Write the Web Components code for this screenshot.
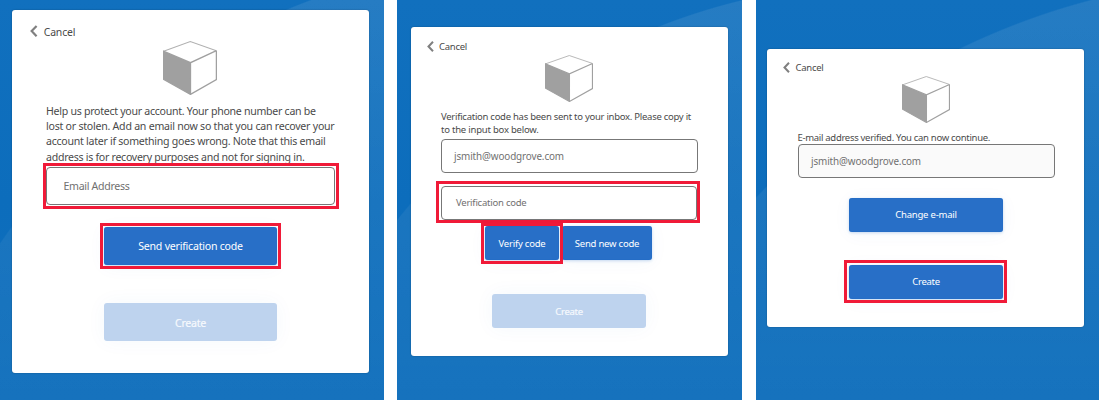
<!DOCTYPE html>
<html lang="en"><head><meta charset="utf-8"><title>Recovery email</title>
<style>
body{margin:0;background:#fff;font-family:"Noto Sans","Open Sans",sans-serif;color:#4a4a4a;width:1099px;height:400px;overflow:hidden}
main{display:flex;gap:13.5px;width:1099px;height:400px}
</style></head><body>
<main>
<auth-panel style="--w:383.5px;--card-x:12px;--card-y:10px;--card-w:357px;--card-h:363px;--circle:circle 655px at 540px 613px">
  <cancel-link style="margin:14px 0 0 18px;--s:1.1" w="31.5"></cancel-link>
  <cube-logo style="width:54px;height:54px;margin:2px 0 0 151.2px"></cube-logo>
  <div style="margin:9px 0 0 34px;font-size:10.6px;line-height:15.2px">
    <text-line w="269.7">Help us protect your account. Your phone number can be</text-line>
    <text-line w="288.5">lost or stolen. Add an email now so that you can recover your</text-line>
    <text-line w="279.5">account later if something goes wrong. Note that this email</text-line>
    <text-line w="258.5">address is for recovery purposes and not for signing in.</text-line>
  </div>
  <input-box marked style="margin:2px 0 0 34px;width:289px;height:38px;--pad:17.5px;--fs:10.6px;--mi:-4px -4px -4px -3px"><text-line w="66" style="padding-top:1px">Email Address</text-line></input-box>
  <action-button marked style="margin:22px 0 0 92px;width:173px;height:38px;--fs:10.6px;--mi:-4px"><text-line w="104.5" style="padding-top:1px">Send verification code</text-line></action-button>
  <action-button disabled style="margin:38.5px 0 0 92px;width:173px;height:38px;--fs:10.6px"><text-line w="31" style="padding-top:1px">Create</text-line></action-button>
</auth-panel>
<auth-panel style="--w:345px;--card-x:13.5px;--card-y:26.5px;--card-w:317px;--card-h:329px;--circle:circle 631px at 493px 613px">
  <cancel-link style="margin:12px 0 0 16px" w="28"></cancel-link>
  <cube-logo style="width:48px;height:47px;margin:1px 0 0 134.5px"></cube-logo>
  <div style="margin:8.5px 0 0 30.5px;font-size:9.5px;line-height:13.4px">
    <text-line w="250">Verification code has been sent to your inbox. Please copy it</text-line>
    <text-line w="97.5">to the input box below.</text-line>
  </div>
  <input-box style="margin:2px 0 0 30px;width:257px;height:34px;--pad:13.5px;--fs:9.9px"><text-line w="110">jsmith@woodgrove.com</text-line></input-box>
  <input-box marked style="margin:13px 0 0 30px;width:256.5px;height:34px;--pad:15.5px;--fs:9.5px;--mi:-5px -3px -3px -5px"><text-line w="70.5">Verification code</text-line></input-box>
  <div style="display:flex;gap:3px;margin:6.5px 0 0 74.5px">
    <action-button marked style="width:74px;height:34px;--mi:-3px -4px -4px -4px"><text-line w="47" style="padding-top:1px">Verify code</text-line></action-button>
    <action-button style="width:90px;height:34px"><text-line w="64.5" style="padding-top:1px">Send new code</text-line></action-button>
  </div>
  <action-button disabled style="margin:34px 0 0 81.5px;width:154px;height:34px"><text-line w="27.5" style="padding-top:1px">Create</text-line></action-button>
</auth-panel>
<auth-panel style="--w:343.5px;--card-x:11.5px;--card-y:48.5px;--card-w:317px;--card-h:278px;--circle:circle 714px at 516px 690px">
  <cancel-link style="margin:11.5px 0 0 16px" w="28"></cancel-link>
  <cube-logo style="width:48px;height:47px;margin:.5px 0 0 134.5px"></cube-logo>
  <div style="margin:8.5px 0 0 30.5px;font-size:9.5px;line-height:13.4px">
    <text-line w="192.5">E-mail address verified. You can now continue.</text-line>
  </div>
  <input-box style="margin:-.5px 0 0 30.5px;width:257px;height:34px;--pad:13.5px;--fs:9.9px;--bg:#fafafa"><text-line w="110">jsmith@woodgrove.com</text-line></input-box>
  <action-button style="margin:20px 0 0 82px;width:154px;height:34px"><text-line w="61.5">Change e-mail</text-line></action-button>
  <action-button marked style="margin:33px 0 0 82px;width:154px;height:34px;--mi:-5px -4px -4px -5px"><text-line w="27.5">Create</text-line></action-button>
</auth-panel>
</main>
<script>
const define=(name,html,init)=>customElements.define(name,class extends HTMLElement{
  constructor(){super();this.attachShadow({mode:'open'}).innerHTML=html}
  connectedCallback(){if(init)init(this,this.shadowRoot)}
});
// A single line whose tracking is adjusted to a nominal width.
define('text-line','<style>:host{display:block;white-space:nowrap}span{display:inline-block}</style><span><slot></slot></span>',(el,r)=>{
  const s=r.querySelector('span'),w=+el.getAttribute('w');
  requestAnimationFrame(()=>{s.style.letterSpacing=(w-s.getBoundingClientRect().width)/el.textContent.length+'px'});
});
define('cancel-link',`<style>:host{display:flex;align-items:center;height:15px;font-size:10px}
svg{width:calc(7px*var(--s,1));height:calc(11px*var(--s,1));margin-right:calc(5.5px*var(--s,1))}text-line{font-size:calc(9.5px*var(--s,1))}</style>
<svg viewBox="0 0 7 11"><path d="M6 .8 1.5 5.5 6 10.2" fill="none" stroke="#808080" stroke-width="2"/></svg><text-line></text-line>`,(el,r)=>{
  const t=document.createElement('text-line');t.setAttribute('w',el.getAttribute('w'));t.textContent='Cancel';r.querySelector('text-line').replaceWith(t);
});
define('cube-logo',`<style>:host{display:block}svg{display:block;width:100%;height:100%}</style>
<svg viewBox="0 0 54 53" preserveAspectRatio="none"><path d="M.6 10 27.5 21.3V52.4L.6 37.5Z" fill="#a0a0a0"/><path d="M.6 10 27.3.6 53.4 9.5" fill="none" stroke="#b0b0b0"/><path d="M53.4 9.5V37.8L27.5 52.4.6 37.5V10L27.5 21.3 53.4 9.5M27.5 21.3V52.4" fill="none" stroke="#a0a0a0" stroke-width="1.3"/></svg>`);
define('input-box',`<style>:host{display:flex;align-items:center;position:relative;box-sizing:border-box;border:1.5px solid #777;border-radius:4px;background:var(--bg,#fff);padding-left:calc(var(--pad) - 1px);font-size:var(--fs);color:#707070}
:host([marked])::after{content:"";position:absolute;inset:var(--mi);margin:-1px;border:3px solid #f01a38}</style><slot></slot>`);
define('action-button',`<style>:host{display:flex;align-items:center;justify-content:center;position:relative;box-sizing:border-box;border-radius:3px;background:#286fc7;color:#fff;font-size:var(--fs,9.5px);box-shadow:inset 0 0 1px #0b5cc0,0 1px 3px #286fc740,0 2px 18px #286fc70c}
:host([disabled]){background:#bed3ee;color:#f6f9fd;-webkit-text-stroke:.2px #f6f9fd;box-shadow:0 0 20px #286fc70c}
:host([marked])::after{content:"";position:absolute;z-index:1;inset:var(--mi);border:3px solid #f01a38}</style><slot></slot>`);
define('auth-panel',`<style>:host{display:block;position:relative;flex:none;width:var(--w);height:400px;box-sizing:border-box;padding:var(--card-y) 0 0 var(--card-x);overflow:hidden;background:linear-gradient(#1170be,#0c6dbc 50%,#106fbc)}
:host::before{content:"";position:absolute;inset:0;background:linear-gradient(#ffffff17,#ffffff0e 60%,#ffffff07);mask:radial-gradient(var(--circle),#000 99.8%,transparent 100%)}
section{display:flow-root;position:relative;width:var(--card-w);height:var(--card-h);background:#fff;border-radius:3px;box-shadow:0 0 1.5px #0006}</style><section><slot></slot></section>`);
</script></body></html>
